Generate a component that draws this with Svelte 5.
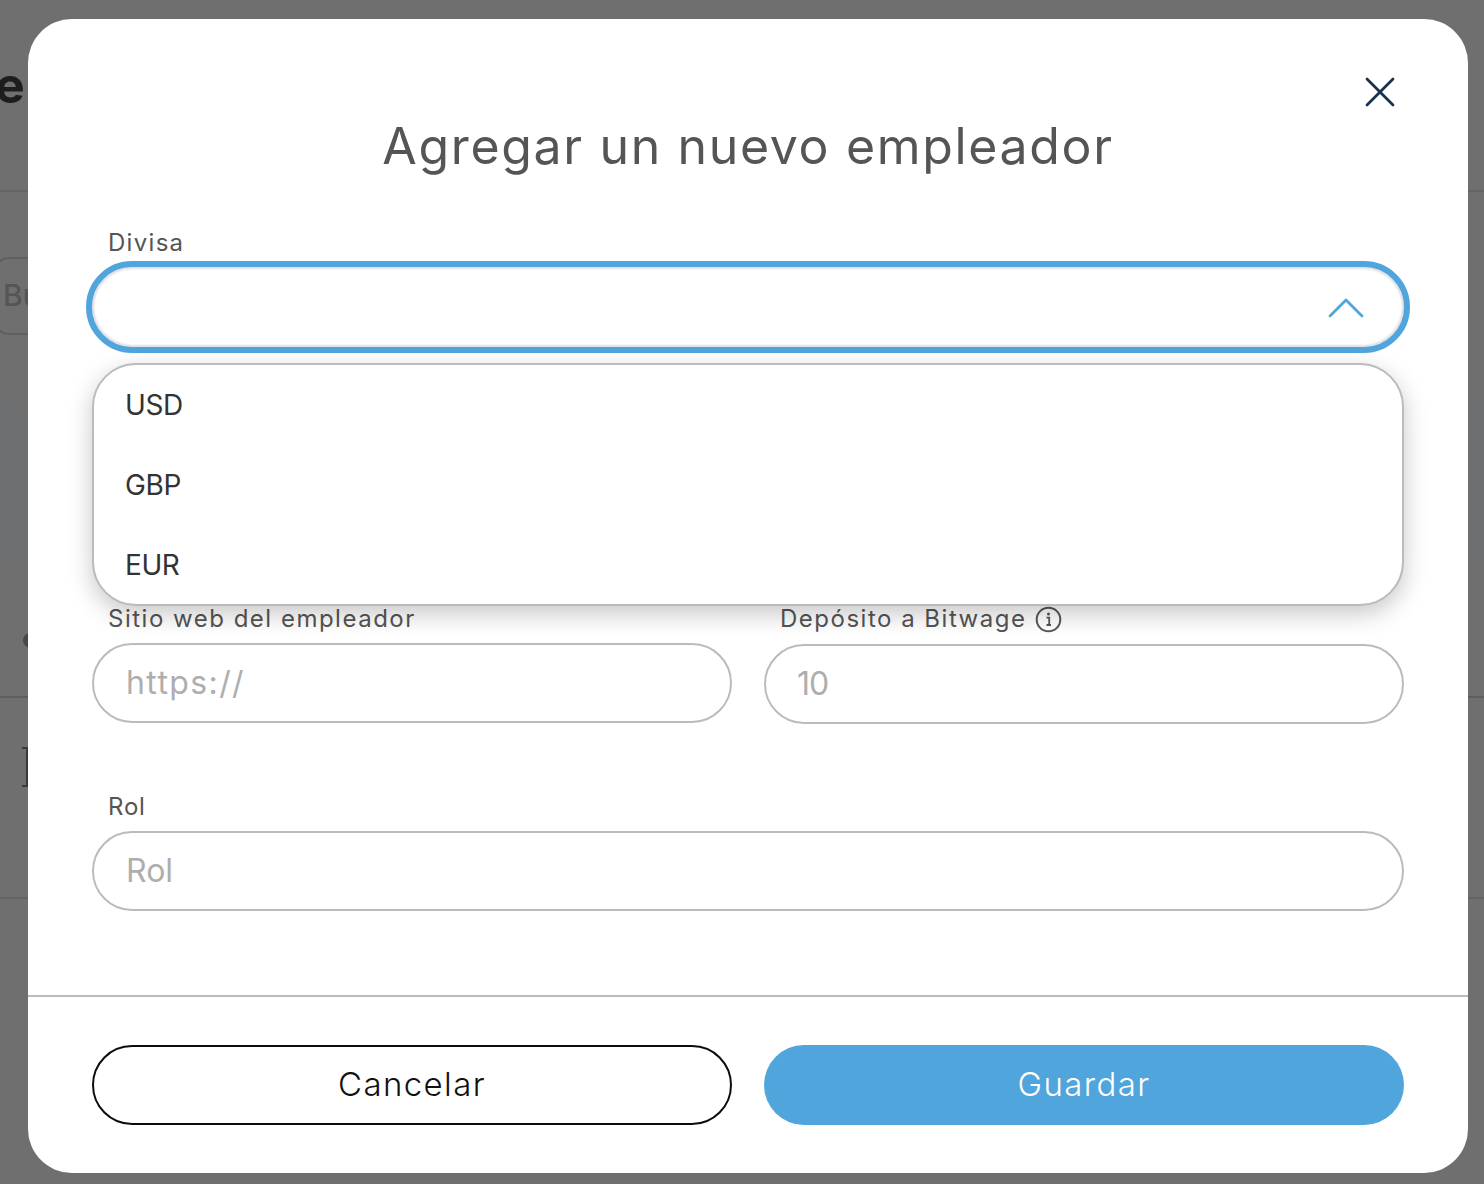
<script>
  const currencies = ['USD', 'GBP', 'EUR'];
</script>

<div class="page">
  <div class="backdrop">
    <div class="bg-head"><span class="bg-e">e</span></div>
    <div class="bg-search"><span class="bg-btn">Bu</span></div>
    <div class="bg-panel">
      <div class="bg-tint"></div>
      <div class="bg-blob"></div>
    </div>
    <div class="bg-row"><div class="bg-bracket"></div></div>
  </div>

  <div class="modal">
    <button class="close" aria-label="Cerrar">
      <svg width="30" height="30" viewBox="0 0 30 30" fill="none"><path d="M2 2 L28 28 M28 2 L2 28" stroke="#16324f" stroke-width="2.8" stroke-linecap="round"/></svg>
    </button>
    <h1>Agregar un nuevo empleador</h1>

    <div class="form">
      <div class="field currency">
        <span class="label">Divisa</span>
        <div class="select">
          <svg class="chevron" width="36" height="20" viewBox="0 0 36 20" fill="none"><path d="M2 18 L18 2 L34 18" stroke="#4fa5dc" stroke-width="2.8" stroke-linecap="round" stroke-linejoin="round"/></svg>
        </div>
        <ul class="menu">
          {#each currencies as c}
            <li>{c}</li>
          {/each}
        </ul>
      </div>

      <div class="row">
        <div class="field">
          <span class="label">Sitio web del empleador</span>
          <div class="input url">https://</div>
        </div>
        <div class="field deposit">
          <span class="label">Depósito a Bitwage
            <svg width="27" height="27" viewBox="0 0 27 27" fill="none"><circle cx="13.5" cy="13.5" r="11.8" stroke="#555" stroke-width="2"/><circle cx="13.5" cy="8" r="1.5" fill="#555"/><path d="M11.5 11.6 H14.2 V18.5 M11.5 19 H16" stroke="#555" stroke-width="1.8"/></svg>
          </span>
          <div class="input short">10</div>
        </div>
      </div>

      <div class="field role">
        <span class="label">Rol</span>
        <div class="input">Rol</div>
      </div>
    </div>

    <div class="footer">
      <button class="btn cancel">Cancelar</button>
      <button class="btn save">Guardar</button>
    </div>
  </div>
</div>

<style>
  :global(body) { margin: 0; background: #6f6f6f; }
  .page {
    position: relative;
    width: 1484px;
    height: 1184px;
    overflow: hidden;
    font-family: "Inter", "Liberation Sans", sans-serif;
  }
  .backdrop { display: flex; flex-direction: column; height: 100%; background: #6f6f6f; color: #2a2a2a; }
  .bg-head { height: 171px; padding-top: 19px; border-bottom: 2px solid #646464; box-sizing: content-box; }
  .bg-e { display: block; margin-left: -5px; font: 700 50px/132px "Inter", sans-serif; color: #1d1d1d; }
  .bg-search { height: 209px; padding-top: 65px; box-sizing: border-box; }
  .bg-btn { display: block; width: 60px; height: 78px; margin-left: -4px; box-sizing: border-box; border: 2px solid #5f5f5f; border-radius: 12px; padding-left: 5px; font: 500 30px/72px "Inter", sans-serif; color: #555; }
  .bg-panel { height: 295px; border-bottom: 2px solid #5f5f5f; position: relative; }
  .bg-tint { height: 160px; background: #6c6e70; }
  .bg-blob { position: absolute; left: 23px; top: 232px; width: 8px; height: 15px; background: #474747; border-radius: 8px 0 0 8px; }
  .bg-row { height: 201px; border-bottom: 2px solid #636363; padding-top: 49px; box-sizing: border-box; }
  .bg-bracket { width: 4px; height: 36px; margin-left: 22px; border: solid #3a3a3a; border-width: 2px 2px 2px 0; }

  .modal {
    position: absolute;
    left: 28px;
    top: 19px;
    width: 1440px;
    height: 1154px;
    background: #fff;
    border-radius: 44px;
    display: flex;
    flex-direction: column;
  }
  .close {
    position: absolute;
    right: 73px;
    top: 58px;
    padding: 0;
    background: none;
    border: none;
    display: flex;
  }
  h1 {
    margin: 0;
    padding-top: 96px;
    font-size: 50px;
    line-height: 62px;
    font-weight: 400;
    letter-spacing: 1.65px;
    color: #555;
    text-align: center;
  }
  .form {
    flex: 1;
    padding: 49px 64px 0;
    display: flex;
    flex-direction: column;
  }
  .field { display: flex; flex-direction: column; position: relative; min-width: 0; }
  .label {
    font-size: 24px;
    line-height: 32px;
    color: #555;
    padding-left: 16px;
    letter-spacing: 1.5px;
    display: flex;
    align-items: center;
    gap: 9px;
  }
  .currency .label { line-height: 34px; letter-spacing: 1.3px; }
  .role .label { letter-spacing: 0.8px; }
  .select {
    margin: 1px -6px 0;
    height: 92px;
    box-sizing: border-box;
    border: 6px solid #4fa5dc;
    border-radius: 46px;
    box-shadow: inset 0 0 2px 2px #e0e0e4;
    display: flex;
    align-items: center;
    justify-content: flex-end;
    padding-right: 40px;
  }
  .chevron { margin-top: 2px; }
  .menu {
    position: absolute;
    z-index: 2;
    top: 137px;
    left: 0;
    right: 0;
    height: 243px;
    margin: 0;
    padding: 0;
    box-sizing: border-box;
    list-style: none;
    background: #fff;
    border: 2px solid #bbb;
    border-radius: 44px;
    box-shadow: 0 8px 24px rgba(0,0,0,.22);
  }
  .menu li {
    height: 80px;
    line-height: 81px;
    padding-left: 31px;
    font-size: 28px;
    letter-spacing: -0.4px;
    color: #333;
  }
  .row {
    display: grid;
    grid-template-columns: 640px 640px;
    gap: 32px;
    margin-top: 250px;
  }
  .input {
    height: 80px;
    box-sizing: border-box;
    margin-top: 8px;
    border: 2px solid #bbb;
    border-radius: 40px;
    padding-left: 32px;
    font-size: 32px;
    line-height: 76px;
    color: #aeaeae;
  }
  .url { letter-spacing: 1.4px; }
  .short { letter-spacing: -1px; padding-left: 31px; }
  .deposit .input { margin-top: 9px; }
  .role { margin-top: 67px; }
  .footer {
    border-top: 2px solid #bbb;
    padding: 48px 64px;
    display: grid;
    grid-template-columns: 640px 640px;
    gap: 32px;
  }
  .btn {
    height: 80px;
    box-sizing: border-box;
    border-radius: 40px;
    font-family: inherit;
    font-size: 33px;
    font-weight: 300;
    letter-spacing: 1.4px;
    padding-bottom: 4px;
  }
  .cancel { background: #fff; border: 2px solid #0c0c0c; color: #111; }
  .save { background: #4fa5dc; border: none; color: #fff; }
</style>
